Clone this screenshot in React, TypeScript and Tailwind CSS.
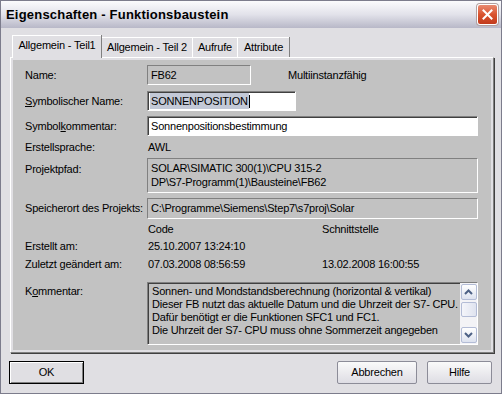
import type { ReactNode } from "react";

const sunkenGray =
  "border border-t-[#808080] border-l-[#808080] border-b-white border-r-white bg-[#c2c2c2]";
const sunkenWhite =
  "border border-t-[#808080] border-l-[#808080] border-b-white border-r-white bg-white shadow-[inset_1px_1px_0_#404040]";

function CloseButton() {
  return (
    <div className="w-[21px] h-[21px] rounded-[3px] border border-white bg-gradient-to-b from-[#e88a70] via-[#d9532f] to-[#c23a1c] shadow-[0_0_0_1px_#b0a0a0] flex items-center justify-center">
      <svg width="11" height="11" viewBox="0 0 11 11">
        <path d="M1.5 1.5 L9.5 9.5 M9.5 1.5 L1.5 9.5" stroke="white" strokeWidth="2" strokeLinecap="square" />
      </svg>
    </div>
  );
}

function Tab({ label, width, active }: { label: string; width: string; active?: boolean }) {
  return (
    <div
      className={
        active
          ? `${width} h-[23px] -mb-px relative z-10 bg-[#e0dfe3] border-l border-t border-white shadow-[1px_0_0_#808080] flex items-center justify-center pb-[3px]`
          : `${width} h-[20px] bg-[#e0dfe3] border-l border-t border-white shadow-[1px_0_0_#808080] flex items-center justify-center`
      }
    >
      {label}
    </div>
  );
}

function Row({ label, className, children }: { label: ReactNode; className: string; children?: ReactNode }) {
  return (
    <div className={`flex ${className}`}>
      <div className="w-[122px] shrink-0 whitespace-nowrap">{label}</div>
      {children}
    </div>
  );
}

function ScrollArrow({ up }: { up?: boolean }) {
  return (
    <div className="h-[16px] w-[16px] rounded-[2px] border border-[#b3bcd6] bg-gradient-to-b from-white to-[#dde2ef] flex items-center justify-center">
      <svg width="9" height="6" viewBox="0 0 9 6">
        <path
          d={up ? "M1 5 L4.5 1.5 L8 5" : "M1 1 L4.5 4.5 L8 1"}
          fill="none"
          stroke="#4d6185"
          strokeWidth="2"
        />
      </svg>
    </div>
  );
}

function Button({ label, width, isDefault }: { label: string; width: string; isDefault?: boolean }) {
  return (
    <div
      className={
        isDefault
          ? `${width} h-[23px] border border-black bg-[#e0dfe3] shadow-[inset_1px_1px_0_white,inset_-1px_-1px_0_#808080] flex items-center justify-center`
          : `${width} h-[23px] rounded-[2px] border border-[#8c8c98] bg-gradient-to-b from-[#fafafa] to-[#dedde4] flex items-center justify-center`
      }
    >
      {label}
    </div>
  );
}

export default function App() {
  return (
    <div className="w-[502px] h-[394px] bg-[#e0dfe3] border border-[#7c7c8c] flex flex-col font-['Liberation_Sans',Arial,sans-serif] text-[11px] tracking-[-0.2px] text-black overflow-hidden">
      {/* Titelleiste */}
      <div className="h-[27px] shrink-0 flex items-center justify-between pl-[5px] pr-[3px] bg-gradient-to-b from-[#fbfbfd] via-[#e2e2ea] to-[#b8b8c8]">
        <span className="text-[13px] font-bold tracking-[0.2px]">Eigenschaften - Funktionsbaustein</span>
        <CloseButton />
      </div>

      <div className="flex-1 flex flex-col pl-[9px] pr-[7px] pt-[7px]">
        {/* Reiter */}
        <div className="h-[22px] flex items-end pl-[2px]">
          <Tab label="Allgemein - Teil1" width="w-[89px]" active />
          <Tab label="Allgemein - Teil 2" width="w-[91px]" />
          <Tab label="Aufrufe" width="w-[45px]" />
          <Tab label="Attribute" width="w-[52px]" />
        </div>

        {/* Seite */}
        <div className="h-[296px] border border-t-white border-l-white border-b-[#808080] border-r-[#808080] shadow-[1px_1px_0_#404040] p-[2px]">
          <div className="h-full bg-[#c2c2c2] pl-[12px] pr-[13px] pt-[5px] flex flex-col">
            <Row label="Name:" className="h-[20px] items-center mt-0">
              <div className={`${sunkenGray} w-[104px] h-[20px] pl-[3px] flex items-center`}>FB62</div>
              <span className="ml-[37px]">Multiinstanzfähig</span>
            </Row>

            <Row
              label={
                <>
                  <u>S</u>ymbolischer Name:
                </>
              }
              className="h-[20px] items-center mt-[6px]"
            >
              <div className={`${sunkenWhite} w-[149px] h-[20px] pl-[2px] flex items-center`}>
                <span className="bg-[#c3c9d7] px-px">SONNENPOSITION</span>
                <span className="w-px h-[13px] bg-black" />
              </div>
            </Row>

            <Row
              label={
                <>
                  Symbol<u>k</u>ommentar:
                </>
              }
              className="h-[20px] items-center mt-[5px]"
            >
              <div className={`${sunkenWhite} flex-1 h-[20px] pl-[3px] flex items-center`}>
                Sonnenpositionsbestimmung
              </div>
            </Row>

            <Row label="Erstellsprache:" className="h-[14px] items-center mt-[4px]">
              <span className="pl-px">AWL</span>
            </Row>

            <Row label={<div className="pt-[3px]">Projektpfad:</div>} className="mt-[4px]">
              <div className={`${sunkenGray} flex-1 h-[35px] pl-[3px] pt-[2px] leading-[14px]`}>
                <div>{"SOLAR\\SIMATIC 300(1)\\CPU 315-2"}</div>
                <div>{"DP\\S7-Programm(1)\\Bausteine\\FB62"}</div>
              </div>
            </Row>

            <Row label="Speicherort des Projekts:" className="h-[21px] items-center mt-[5px]">
              <div className={`${sunkenGray} flex-1 h-[21px] pl-[3px] flex items-center`}>
                {"C:\\Programme\\Siemens\\Step7\\s7proj\\Solar"}
              </div>
            </Row>

            <Row label="" className="h-[14px] items-center mt-[3px]">
              <span className="w-[175px] pl-px">Code</span>
              <span>Schnittstelle</span>
            </Row>

            <Row label="Erstellt am:" className="h-[14px] items-center mt-[3px]">
              <span className="w-[175px] pl-px">25.10.2007 13:24:10</span>
            </Row>

            <Row label="Zuletzt geändert am:" className="h-[14px] items-center mt-[4px]">
              <span className="w-[175px] pl-px">07.03.2008 08:56:59</span>
              <span>13.02.2008 16:00:55</span>
            </Row>

            <Row
              label={
                <div className="pt-[1px]">
                  K<u>o</u>mmentar:
                </div>
              }
              className="mt-[11px]"
            >
              <div className={`${sunkenGray} shadow-[inset_1px_1px_0_#404040] flex-1 h-[63px] flex`}>
                <div className="flex-1 pl-[4px] pt-[2px] leading-[13px] whitespace-nowrap overflow-hidden">
                  <div>Sonnen- und Mondstandsberechnung (horizontal &amp; vertikal)</div>
                  <div>Dieser FB nutzt das aktuelle Datum und die Uhrzeit der S7- CPU.</div>
                  <div>Dafür benötigt er die Funktionen SFC1 und FC1.</div>
                  <div>Die Uhrzeit der S7- CPU muss ohne Sommerzeit angegeben</div>
                </div>
                <div className="w-[17px] bg-[#f3f3f6] flex flex-col items-center py-px">
                  <ScrollArrow up />
                  <div className="mt-[2px] h-[15px] w-[16px] rounded-[2px] border border-[#b3bcd6] bg-gradient-to-r from-[#f4f5fa] to-[#dfe3ef]" />
                  <div className="flex-1" />
                  <ScrollArrow />
                </div>
              </div>
            </Row>
          </div>
        </div>

        {/* Schaltflächen */}
        <div className="mt-[8px] flex items-center -ml-px mr-[2px]">
          <Button label="OK" width="w-[75px]" isDefault />
          <div className="flex-1" />
          <Button label="Abbrechen" width="w-[80px]" />
          <div className="w-[10px]" />
          <Button label="Hilfe" width="w-[65px]" />
        </div>
      </div>
    </div>
  );
}
